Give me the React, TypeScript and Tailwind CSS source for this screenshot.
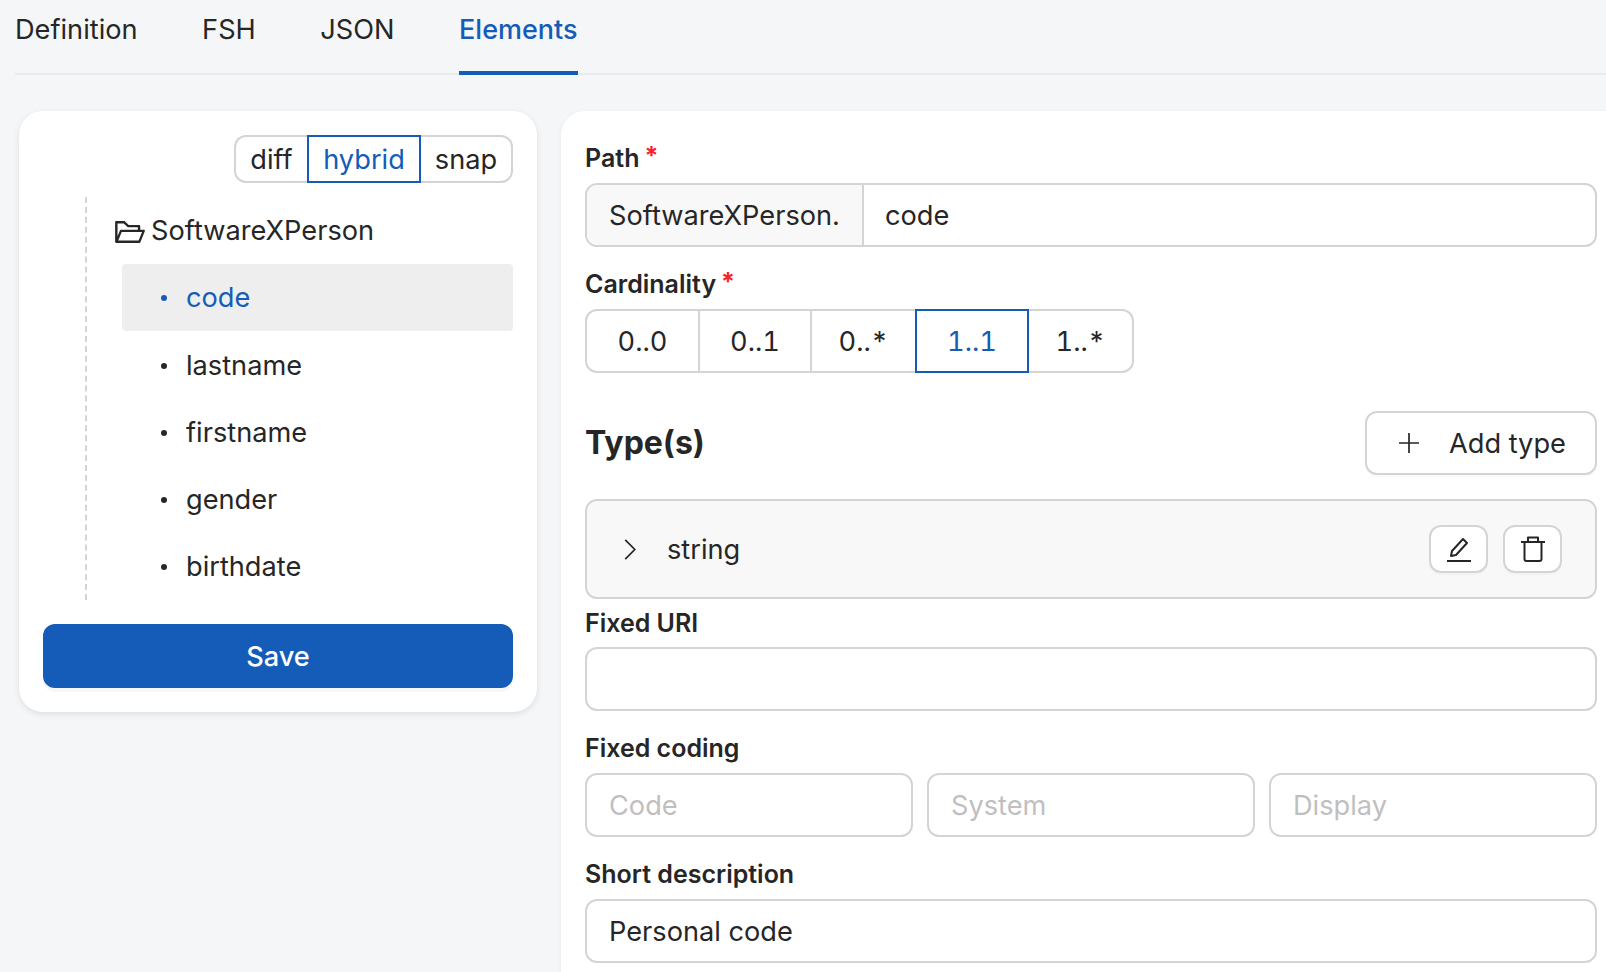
import { AiOutlineFolderOpen } from 'react-icons/ai';

const TABS = ['Definition', 'FSH', 'JSON'];
const ELEMENTS = ['code', 'lastname', 'firstname', 'gender', 'birthdate'];
const CARDINALITIES = [
  { label: '0..0', width: 'w-[115px]' },
  { label: '0..1', width: 'w-[112px]' },
  { label: '0..*', width: 'w-[103px]' },
  { label: '1..1', width: 'w-[114px]', active: true },
  { label: '1..*', width: 'w-[105px]' },
];

function Label({ text, required }: { text: string; required?: boolean }) {
  return (
    <div className="flex h-[36px] items-center pt-[2px] text-[25px] font-semibold">
      {text}
      {required && <span className="-mt-[5px] ml-[5px] text-[25px] font-bold text-[#f5222d]">*</span>}
    </div>
  );
}

function Field({ value, placeholder }: { value?: string; placeholder?: string }) {
  return (
    <div className="flex h-[64px] min-w-0 flex-1 items-center rounded-[12px] border-2 border-[#d4d4d4] bg-white px-[22px] pt-[2px]">
      {value ?? <span className="text-[#bfbfbf]">{placeholder}</span>}
    </div>
  );
}

export default function App() {
  return (
    <div className="h-[972px] w-[1606px] overflow-hidden bg-[#f5f6f8] pl-[15px] font-['Inter',sans-serif] text-[27.2px] text-[#262626]">
      {/* Tabs */}
      <div className="flex h-[75px] gap-[64.5px] border-b-2 border-[#eaebed]">
        {TABS.map((t) => (
          <div key={t} className="pt-[11px] leading-[38px]">{t}</div>
        ))}
        <div className="h-[75px] border-b-4 border-[#145cb8] pt-[11px] text-[27px] leading-[38px] font-medium text-[#145cb8]">
          Elements
        </div>
      </div>

      <div className="mt-[36px] flex items-start gap-[24px] pl-[4px]">
        {/* Element tree */}
        <div className="flex h-[601px] w-[518px] shrink-0 flex-col rounded-[24px] bg-white px-[24px] pt-[24px] shadow-[0_2px_6px_rgba(0,0,0,0.1)]">
          <div className="flex h-[48px] justify-end">
            <div className="flex h-full w-[73px] items-center justify-center rounded-l-[12px] border-2 border-r-0 border-[#d4d4d4] pt-[2px]">diff</div>
            <div className="flex h-full w-[114px] items-center justify-center border-2 border-[#145cb8] pt-[2px] text-[#145cb8]">hybrid</div>
            <div className="flex h-full w-[92px] items-center justify-center rounded-r-[12px] border-2 border-l-0 border-[#d4d4d4] pt-[2px]">snap</div>
          </div>

          <div className="relative ml-[42px] mt-[14px] h-[403px] border-l-2 border-dashed border-[#d4d4d4]">
            <div className="flex h-[67px] items-center pl-[26px] pt-[2px]">
              <AiOutlineFolderOpen className="mr-[4px] size-[34px]" />
              SoftwareXPerson
            </div>
            {ELEMENTS.map((el, i) => (
              <div
                key={el}
                className={`ml-[35px] flex h-[67px] items-center rounded-[4px] pl-[39px] ${i === 0 ? 'bg-[#eeeeee] pt-[2px] text-[#145cb8]' : 'pt-[4px]'}`}
              >
                <span className={`mr-[19px] -mt-[2px] size-[6px] rounded-full ${i === 0 ? 'bg-[#145cb8]' : 'bg-[#262626]'}`} />
                {el}
              </div>
            ))}
          </div>

          <button
            type="button"
            className="mt-[24px] h-[64px] w-full rounded-[12px] bg-[#145cb8] pt-[2px] font-medium text-white shadow-[0_4px_0_rgba(0,0,0,0.03)]"
          >
            Save
          </button>
        </div>

        {/* Element form */}
        <div className="h-[900px] w-[1100px] shrink-0 rounded-tl-[24px] bg-white pl-[24px] pt-[29px] shadow-[0_1px_4px_rgba(0,0,0,0.06)]">
          <div className="w-[1012px]">
            <Label text="Path" required />
            <div className="mt-[7px] flex h-[64px] overflow-hidden rounded-[12px] border-2 border-[#d4d4d4]">
              <div className="flex w-[277px] items-center border-r-2 border-[#d4d4d4] bg-[#f8f8f8] pl-[22px] pt-[2px]">
                SoftwareXPerson.
              </div>
              <div className="flex flex-1 items-center pl-[21px] pt-[2px]">code</div>
            </div>

            <div className="mt-[19px]">
              <Label text="Cardinality" required />
            </div>
            <div className="mt-[7px] flex h-[64px] w-[549px]">
              {CARDINALITIES.map((c, i) => (
                <div
                  key={c.label}
                  className={`flex items-center justify-center border-y-2 pt-[2px] tabular-nums ${c.width} ${
                    c.active ? 'border-x-2 border-[#145cb8] text-[#145cb8]' : 'border-[#d4d4d4]'
                  } ${i === 0 ? 'rounded-l-[12px] border-l-2' : ''} ${i === 4 ? 'rounded-r-[12px] border-r-2' : ''} ${
                    i === 0 || i === 1 ? 'border-r-2' : ''
                  }`}
                >
                  {c.label}
                </div>
              ))}
            </div>

            {/* Types */}
            <div className="mt-[38px] flex h-[64px] items-center justify-between">
              <div className="text-[32px] font-bold">Type(s)</div>
              <button
                type="button"
                className="flex h-[64px] w-[232px] items-center rounded-[12px] border-2 border-[#d4d4d4] bg-white pl-[32px] pt-[2px] shadow-[0_2px_0_rgba(0,0,0,0.02)]"
              >
                <svg viewBox="0 0 20 20" className="mr-[30px] -mt-[2px] size-[20px]" fill="none" stroke="currentColor" strokeWidth="1.7">
                  <path d="M10 0v20M0 10h20" />
                </svg>
                Add type
              </button>
            </div>

            <div className="mt-[24px] flex h-[100px] items-center rounded-[12px] border-2 border-[#d4d4d4] bg-[#f8f8f8] pl-[37px] pr-[33px]">
              <svg viewBox="0 0 12 22" className="mr-[31px] h-[21px] w-[12px]" fill="none" stroke="currentColor" strokeWidth="1.8">
                <path d="M1 1l10 10L1 21" />
              </svg>
              <span className="pt-[2px]">string</span>
              <div className="ml-auto flex gap-[15px]">
                <button type="button" className="flex h-[48px] w-[59px] items-center justify-center rounded-[12px] border-2 border-[#d4d4d4] bg-white shadow-[0_2px_0_rgba(0,0,0,0.02)]">
                  <svg viewBox="0 0 26 26" className="size-[26px]" fill="none" stroke="currentColor" strokeWidth="2" strokeLinejoin="round">
                    <path d="M1 25h24M5 20l1-5L17 3l4 4L10 19z" />
                  </svg>
                </button>
                <button type="button" className="flex h-[48px] w-[59px] items-center justify-center rounded-[12px] border-2 border-[#d4d4d4] bg-white shadow-[0_2px_0_rgba(0,0,0,0.02)]">
                  <svg viewBox="0 0 24 26" className="h-[26px] w-[24px]" fill="none" stroke="currentColor" strokeWidth="2" strokeLinejoin="round">
                    <path d="M0 6h24M7 6V1.500h10V6M3.500 6v17a2 2 0 0 0 2 2h13a2 2 0 0 0 2-2V6" />
                  </svg>
                </button>
              </div>
            </div>

            <div className="mt-[6px]"><Label text="Fixed URI" /></div>
            <div className="mt-[6px] flex"><Field value="" /></div>

            <div className="mt-[19px]"><Label text="Fixed coding" /></div>
            <div className="mt-[7px] flex gap-[14px]">
              <Field placeholder="Code" />
              <Field placeholder="System" />
              <Field placeholder="Display" />
            </div>

            <div className="mt-[19px]"><Label text="Short description" /></div>
            <div className="mt-[7px] flex"><Field value="Personal code" /></div>
          </div>
        </div>
      </div>
    </div>
  );
}
